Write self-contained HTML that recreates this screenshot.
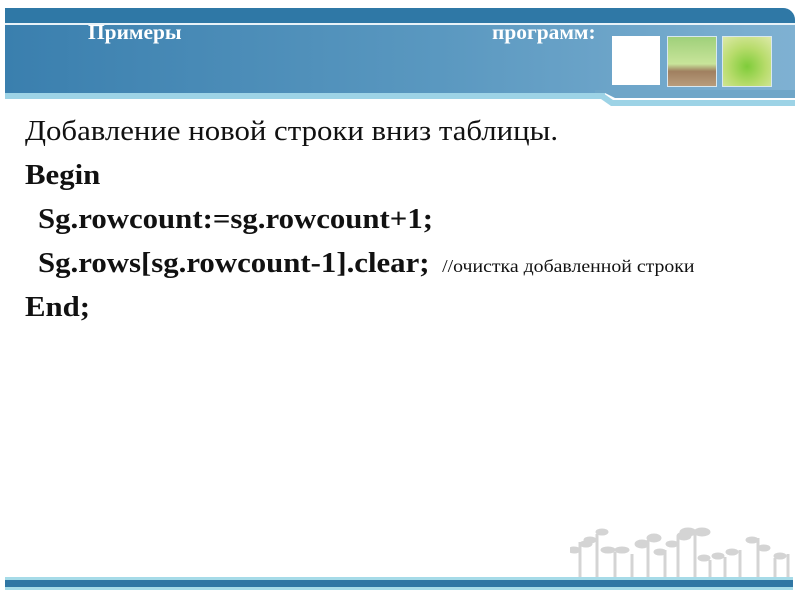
<!DOCTYPE html>
<html><head><meta charset="utf-8"><style>
body{margin:0;width:800px;height:600px;background:#fff;position:relative;overflow:hidden;font-family:"Liberation Serif",serif}
.a{position:absolute}
.t{position:absolute;left:25px;font-size:28px;color:#111;white-space:nowrap;transform:scaleX(1.1);transform-origin:0 0}
.b{font-weight:bold}
</style></head><body>
<div class="a" style="left:5px;top:8px;width:790px;height:85px;border-top-right-radius:12px;background:linear-gradient(90deg,#3a7fae,#5a98c0 55%,#7fb1d2)"></div>
<div class="a" style="left:5px;top:8px;width:790px;height:15px;border-top-right-radius:12px;background:#2f78a6"></div>
<div class="a" style="left:5px;top:23px;width:790px;height:2px;background:#e8f2f8"></div>
<div class="a" style="left:5px;top:93px;width:600px;height:6px;background:#9dd3e6"></div>
<svg class="a" style="left:595px;top:90px" width="200" height="20"><polygon points="0,3 8,3 18,10 200,10 200,16 16,16 6,9 0,9" fill="#9dd3e6"/><polygon points="0,0 200,0 200,8 20,8 10,3 0,3" fill="#6fa6c8"/></svg>
<div class="a b" style="left:88px;top:20px;color:#fff;font-size:21px;transform:scaleX(1.02);transform-origin:0 0">Примеры</div>
<div class="a b" style="left:492px;top:20px;color:#fff;font-size:21px;transform:scaleX(1.02);transform-origin:0 0">программ:</div>
<div class="a" style="left:612px;top:36px;width:48px;height:49px;background:#fff"></div>
<div class="a" style="left:667px;top:36px;width:48px;height:49px;background:linear-gradient(180deg,#9fd07a,#c8e49a 55%,#a08060 70%,#b89c7c);border:1px solid #d8e8f0"></div>
<div class="a" style="left:722px;top:36px;width:48px;height:49px;background:radial-gradient(circle at 50% 60%,#7fcc3a,#b8dc6c 50%,#dde9a8);border:1px solid #d8e8f0"></div>
<div class="t" style="top:116px">Добавление новой строки вниз таблицы.</div>
<div class="t b" style="top:160px">Begin</div>
<div class="t b" style="top:204px;left:38px">Sg.rowcount:=sg.rowcount+1;</div>
<div class="t b" style="top:248px;left:38px">Sg.rows[sg.rowcount-1].clear; <span style="font-weight:normal;font-size:18px">&nbsp;//очистка добавленной строки</span></div>
<div class="t b" style="top:292px">End;</div>
<svg class="a" style="left:570px;top:522px" width="220" height="56" fill="#d4d4d4" stroke="#d4d4d4">
<g stroke-width="3" fill="none">
<path d="M10 56V20M27 56V12M45 56V30M62 56V32M78 56V18M95 56V28M108 56V14M125 56V12M140 56V38M155 56V35M170 56V28M188 56V16M205 56V36M218 56V32"/>
</g>
<g>
<ellipse cx="4" cy="28" rx="6" ry="3"/><ellipse cx="16" cy="22" rx="6" ry="3"/><ellipse cx="20" cy="18" rx="6" ry="3"/><ellipse cx="32" cy="10" rx="6" ry="3"/>
<ellipse cx="38" cy="28" rx="7" ry="3"/><ellipse cx="52" cy="28" rx="7" ry="3"/><ellipse cx="72" cy="22" rx="7" ry="4"/><ellipse cx="84" cy="16" rx="7" ry="4"/>
<ellipse cx="90" cy="30" rx="6" ry="3"/><ellipse cx="102" cy="22" rx="6" ry="3"/><ellipse cx="114" cy="14" rx="7" ry="4"/><ellipse cx="118" cy="10" rx="8" ry="4"/><ellipse cx="132" cy="10" rx="8" ry="4"/>
<ellipse cx="134" cy="36" rx="6" ry="3"/><ellipse cx="148" cy="34" rx="6" ry="3"/><ellipse cx="162" cy="30" rx="6" ry="3"/><ellipse cx="182" cy="18" rx="6" ry="3"/><ellipse cx="194" cy="26" rx="6" ry="3"/><ellipse cx="210" cy="34" rx="6" ry="3"/>
</g></svg>
<div class="a" style="left:5px;top:577px;width:788px;height:13px;background:#a6dbe8"></div>
<div class="a" style="left:5px;top:580px;width:788px;height:7px;background:#2f76a4"></div>
</body></html>
